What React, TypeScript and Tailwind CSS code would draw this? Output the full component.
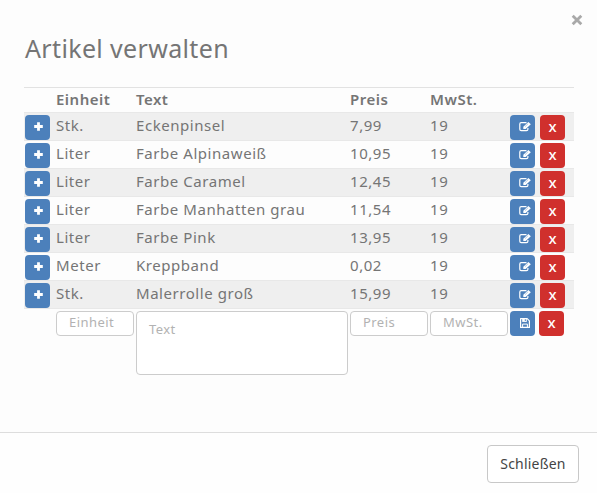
import type { InputHTMLAttributes, ReactNode, SVGProps } from "react";
import clsx from "clsx";

interface Article {
  unit: string;
  text: string;
  price: string;
  vat: string;
}

const articles: Article[] = [
  { unit: "Stk.", text: "Eckenpinsel", price: "7,99", vat: "19" },
  { unit: "Liter", text: "Farbe Alpinaweiß", price: "10,95", vat: "19" },
  { unit: "Liter", text: "Farbe Caramel", price: "12,45", vat: "19" },
  { unit: "Liter", text: "Farbe Manhatten grau", price: "11,54", vat: "19" },
  { unit: "Liter", text: "Farbe Pink", price: "13,95", vat: "19" },
  { unit: "Meter", text: "Kreppband", price: "0,02", vat: "19" },
  { unit: "Stk.", text: "Malerrolle groß", price: "15,99", vat: "19" },
];

const rowGrid = "grid grid-cols-[31px_80px_214px_80px_80px_65px] border-t";

export default function App() {
  return (
    <div className="flex h-[493px] w-[597px] flex-col overflow-hidden bg-[#fdfdfd] font-['Noto_Sans',sans-serif] text-[#757575]">
      <header className="flex h-[87px] shrink-0 items-start justify-between pl-[25px] pr-[14px]">
        <h3 className="mt-[31px] text-[25px] leading-[34px] tracking-[0.35px]">
          Artikel verwalten
        </h3>
        <button type="button" aria-label="Schließen" className="mt-[14px] text-[#a9a9a9]">
          <CloseIcon className="h-3 w-3" />
        </button>
      </header>

      <main className="flex-1 pl-6">
        <div className="w-[550px]">
          <div className={clsx(rowGrid, "h-[25px] border-[#e2e2e2] text-[15px] leading-[23px] font-semibold tracking-[0.5px]")}>
            <span />
            <HeadCell>Einheit</HeadCell>
            <HeadCell>Text</HeadCell>
            <HeadCell>Preis</HeadCell>
            <HeadCell>MwSt.</HeadCell>
          </div>

          {articles.map((article, i) => (
            <div
              key={article.text}
              className={clsx(
                rowGrid,
                "h-7 border-[#e8e8e8] text-[15px] leading-[25px]",
                i % 2 === 0 && "bg-[#efefef]",
              )}
            >
              <div className="pt-0.5 pl-px">
                <IconButton label="Hinzufügen">
                  <PlusIcon className="h-[9px] w-[9px]" />
                </IconButton>
              </div>
              <Cell>{article.unit}</Cell>
              <Cell>{article.text}</Cell>
              <Cell>{article.price}</Cell>
              <Cell>{article.vat}</Cell>
              <div className="flex gap-[5px] pt-0.5 pl-px">
                <IconButton label="Bearbeiten">
                  <EditIcon className="ml-0.5 h-[11px] w-3" />
                </IconButton>
                <DeleteButton />
              </div>
            </div>
          ))}

          <div className={clsx(rowGrid, "border-[#e8e8e8] pt-0.5")}>
            <span />
            <Field placeholder="Einheit" />
            <textarea
              placeholder="Text"
              className="mx-px h-16 resize-none rounded-[4px] border border-[#ccc] bg-white px-3 py-[8px] text-[13px] leading-[18px] tracking-[0.4px] outline-none placeholder:text-[#b2b2b2]"
            />
            <Field placeholder="Preis" />
            <Field placeholder="MwSt." />
            <div className="flex gap-1 pl-px">
              <IconButton label="Speichern">
                <SaveIcon className="ml-0.5 h-[10px] w-[10px]" />
              </IconButton>
              <DeleteButton />
            </div>
          </div>
        </div>
      </main>

      <footer className="flex h-[61px] shrink-0 justify-end border-t border-[#ddd] bg-[#fefefe] pt-3 pr-[18px]">
        <button
          type="button"
          className="h-[38px] w-[92px] rounded-[4px] border border-[#c8c8c8] bg-white pb-0.5 text-[14px] tracking-[0.2px] text-[#444]"
        >
          Schließen
        </button>
      </footer>
    </div>
  );
}

function HeadCell({ children }: { children: ReactNode }) {
  return <span className="pl-px">{children}</span>;
}

function Cell({ children }: { children: ReactNode }) {
  return (
    <span className="pl-px tracking-[0.55px] whitespace-nowrap">{children}</span>
  );
}

function Field(props: InputHTMLAttributes<HTMLInputElement>) {
  return (
    <input
      className="mx-px h-[25px] min-w-0 rounded-[4px] border border-[#ccc] bg-white px-3 pb-[3px] text-[13px] tracking-[0.45px] outline-none placeholder:text-[#b2b2b2]"
      {...props}
    />
  );
}

function IconButton({ label, children }: { label: string; children: ReactNode }) {
  return (
    <button
      type="button"
      aria-label={label}
      className="flex size-[25px] items-center justify-center rounded-[4px] bg-[#4c80bb] pb-0.5 pl-0.5 text-white"
    >
      {children}
    </button>
  );
}

function DeleteButton() {
  return (
    <button
      type="button"
      className="flex size-[25px] items-center justify-center rounded-[4px] bg-[#d0302d] pb-[3px] text-[15px] font-medium text-white"
    >
      x
    </button>
  );
}

function CloseIcon(props: SVGProps<SVGSVGElement>) {
  return (
    <svg viewBox="0 0 12 12" fill="none" {...props}>
      <path d="m1.7 1.7 8.6 8.6M10.3 1.7l-8.6 8.6" stroke="currentColor" strokeWidth="2.8" />
    </svg>
  );
}

function PlusIcon(props: SVGProps<SVGSVGElement>) {
  return (
    <svg viewBox="0 0 9 9" fill="none" {...props}>
      <path d="M4.5 0.2v8.6M0.2 4.5h8.6" stroke="currentColor" strokeWidth="2.8" />
    </svg>
  );
}

// pencil over an open square
function EditIcon(props: SVGProps<SVGSVGElement>) {
  return (
    <svg viewBox="0 0 12 11" fill="none" {...props}>
      <path
        d="M7.5 1.6H2.2C1.4 1.6.8 2.2.8 3v5.2c0 .8.6 1.4 1.4 1.4h5.3c.8 0 1.4-.6 1.4-1.4V7"
        stroke="currentColor"
        strokeWidth="1.2"
      />
      <path d="M9.4.9 11.8 3.2 6.7 8H4.3V5.7z" fill="currentColor" />
      <path d="m6 5.7 3.1-3" stroke="#4c80bb" strokeWidth="0.4" />
    </svg>
  );
}

function SaveIcon(props: SVGProps<SVGSVGElement>) {
  return (
    <svg viewBox="0 0 10 10" fill="none" {...props}>
      <path d="M.6.6h6.6l2.2 2.2v6.6H.6z" stroke="currentColor" strokeWidth="1.2" strokeLinejoin="round" />
      <path d="M2.6 9.2V6.1h4.8v3.1" stroke="currentColor" />
      <path d="M2.2.8h4.6v3.1H2.2z" fill="currentColor" />
      <path d="M4.8 1.2h1v1.9h-1z" fill="#4c80bb" />
    </svg>
  );
}
